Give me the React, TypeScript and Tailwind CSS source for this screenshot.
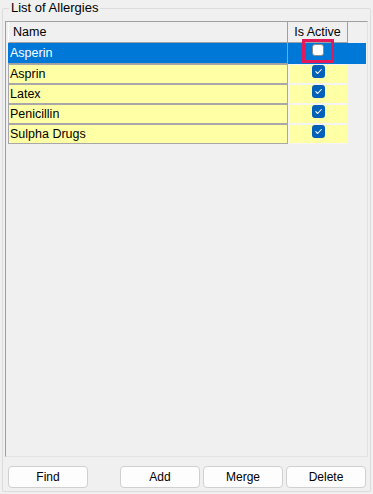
import React from 'react';

interface Allergy {
    name: string;
    active: boolean;
}

const ALLERGIES: Allergy[] = [
    { name: 'Asprin', active: true },
    { name: 'Latex', active: true },
    { name: 'Penicillin', active: true },
    { name: 'Sulpha Drugs', active: true },
];

const CheckedBox: React.FC = () => (
    <span className="flex h-[13px] w-[13px] items-center justify-center rounded-[3px] bg-[#005fb8]">
        <svg width="9" height="9" viewBox="0 0 9 9" fill="none">
            <path d="M1.8 4.7l1.8 1.8 3.7-4" stroke="#ffffff" strokeWidth="1.1" strokeLinecap="round" strokeLinejoin="round" />
        </svg>
    </span>
);

const ActionButton: React.FC<{ label: string }> = ({ label }) => (
    <button className="h-[22px] w-[80px] rounded-[4px] border border-[#d0d0d0] bg-[#fdfdfd] text-[12px] leading-[20px] text-black">
        {label}
    </button>
);

export default function App() {
    return (
        <div className="h-[494px] w-[373px] overflow-hidden bg-[#f0f0f0] pt-[1px] font-['Liberation_Sans',Arial,sans-serif] text-black">
            <fieldset className="ml-[2px] flex h-[491px] w-[369px] flex-col rounded-[2px] border border-[#dcdcdc] px-[2px] pb-[3px]">
                <legend className="ml-[4px] px-[2px] text-[13px] leading-[14px]">List of Allergies</legend>

                <div className="mt-[6px] h-[436px] border-t border-l border-r border-b border-t-[#a0a0a0] border-l-[#a0a0a0] border-r-[#e3e3e3] border-b-[#e3e3e3] pl-[2px]">
                    {/* header */}
                    <div className="flex h-[21px] text-[12.5px]">
                        <div className="w-[280px] border-r border-b border-l border-[#a0a0a0] border-l-[#ffffff] pl-[4px] leading-[20px]">Name</div>
                        <div className="w-[60px] border-r border-b border-[#a0a0a0] text-center leading-[20px]">Is Active</div>
                    </div>

                    {/* selected row */}
                    <div className="flex h-[21px] w-[358px] bg-[#0078d7] text-[12.5px] text-white">
                        <div className="w-[280px] border-r border-b border-[#a0a0a0] pl-[2px] leading-[20px]">Asperin</div>
                        <div className="relative flex w-[60px] justify-center pt-[1px]">
                            <span className="h-[12px] w-[12px] rounded-[3px] border border-[#8a8a8a] bg-white" />
                            <span className="absolute left-[14px] top-[-4px] h-[24px] w-[32px] border-[3px] border-[#e3195a]" />
                        </div>
                    </div>

                    {ALLERGIES.map(a => (
                        <div key={a.name} className="flex h-[20px] text-[12.5px]">
                            <div className="w-[280px] border border-[#a8a8a8] bg-[#ffffa6] pl-[1px] leading-[18px]">{a.name}</div>
                            <div className="flex w-[60px] justify-center border border-[#f4f4f4] bg-[#ffffa6]">
                                {a.active && <CheckedBox />}
                            </div>
                        </div>
                    ))}
                </div>

                <div className="mt-[9px] flex justify-between pl-[3px] pr-[2px]">
                    <ActionButton label="Find" />
                    <div className="flex gap-[3px]">
                        <ActionButton label="Add" />
                        <ActionButton label="Merge" />
                        <ActionButton label="Delete" />
                    </div>
                </div>
            </fieldset>
        </div>
    );
}
